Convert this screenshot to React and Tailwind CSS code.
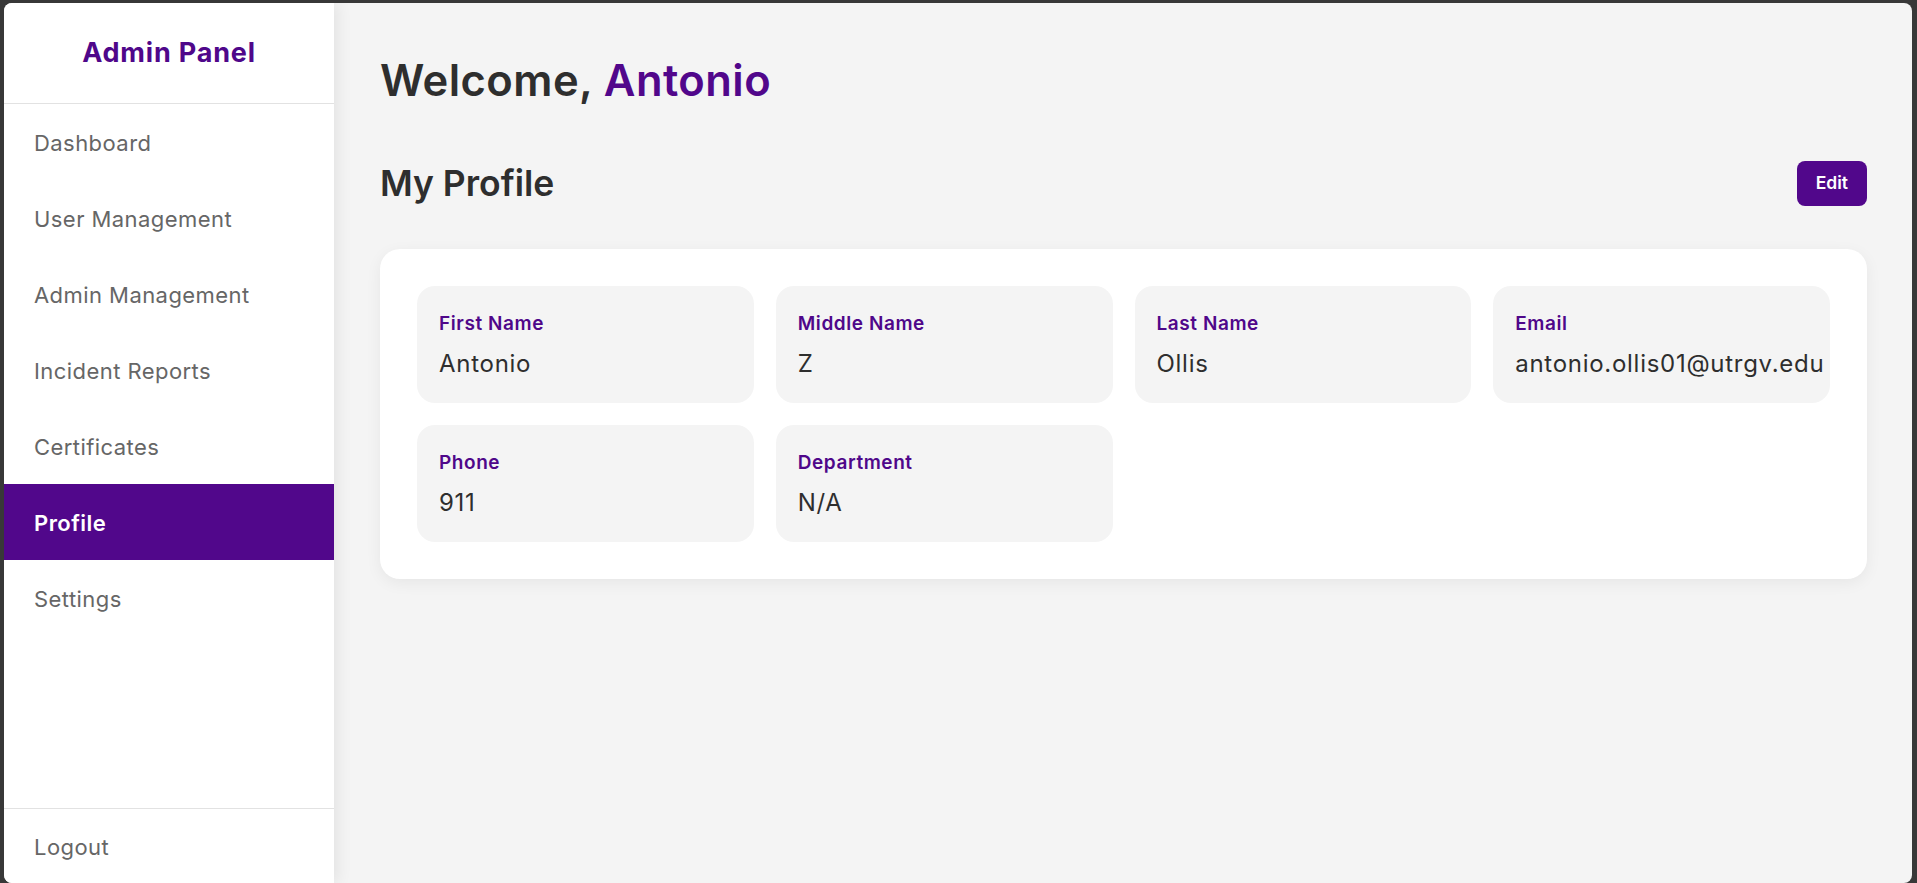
import React from "react";

const navItems = [
  "Dashboard",
  "User Management",
  "Admin Management",
  "Incident Reports",
  "Certificates",
  "Profile",
  "Settings",
];

const fields = [
  { label: "First Name", value: "Antonio" },
  { label: "Middle Name", value: "Z" },
  { label: "Last Name", value: "Ollis" },
  { label: "Email", value: "antonio.ollis01@utrgv.edu" },
  { label: "Phone", value: "911" },
  { label: "Department", value: "N/A" },
];

function Sidebar({ active }) {
  return (
    <aside className="w-[330px] shrink-0 bg-white flex flex-col shadow-[4px_0_14px_rgba(0,0,0,0.07)] z-10">
      <div className="h-[101px] flex items-center justify-center border-b border-[#e2e2e2]">
        <h1 className="text-[27px] tracking-[0.03em] font-bold text-[#4f078a]">Admin Panel</h1>
      </div>
      <nav className="flex flex-col">
        {navItems.map((item) => (
          <div
            key={item}
            className={`h-[76px] flex items-center px-[30px] pt-[2px] text-[22px] tracking-[0.02em] cursor-pointer ${
              active === item ? "bg-[#51078b] text-white font-semibold" : "text-[#666666]"
            }`}
          >
            {item}
          </div>
        ))}
      </nav>
      <div className="mt-auto border-t border-[#e2e2e2] h-[75px] flex items-center px-[30px] pt-[3px] text-[22px] tracking-[0.02em] text-[#666666]">
        Logout
      </div>
    </aside>
  );
}

function Field({ label, value }) {
  return (
    <div className="bg-[#f4f4f4] rounded-[18px] pt-[26px] pb-[23px] px-[22px] overflow-hidden">
      <p className="text-[19px] leading-[24px] tracking-[0.03em] font-semibold text-[#4f078a]">{label}</p>
      <p className="mt-[12px] text-[24px] leading-[32px] tracking-[0.03em] text-[#2e2e2e] whitespace-nowrap">
        {value}
      </p>
    </div>
  );
}

export default function App() {
  return (
    <div
      className="w-full h-screen bg-[#383838] pt-[3px] pl-[4px] pr-[5px]"
      style={{ fontFamily: "Inter, 'Open Sans', sans-serif" }}
    >
      <div className="h-full flex rounded-[8px] overflow-hidden bg-[#f4f4f4]">
        <Sidebar active="Profile" />
        <main className="flex-1 pl-[46px] pr-[45px] pt-[49px]">
          <h2 className="text-[43.5px] leading-[56px] tracking-[0.01em] font-semibold text-[#2e2e2e]">
            Welcome, <span className="text-[#51078b]">Antonio</span>
          </h2>
          <div className="mt-[53px] flex items-center justify-between h-[45px]">
            <h3 className="text-[35.5px] font-semibold text-[#2e2e2e]">My Profile</h3>
            <button className="h-[45px] px-[19px] rounded-[8px] bg-[#51078b] text-white text-[17.5px] font-semibold">
              Edit
            </button>
          </div>
          <div className="mt-[43px] bg-white rounded-[20px] p-[37px] shadow-[0_4px_16px_rgba(0,0,0,0.06)]">
            <div className="grid grid-cols-4 gap-[22px]">
              {fields.map((f) => (
                <Field key={f.label} label={f.label} value={f.value} />
              ))}
            </div>
          </div>
        </main>
      </div>
    </div>
  );
}
